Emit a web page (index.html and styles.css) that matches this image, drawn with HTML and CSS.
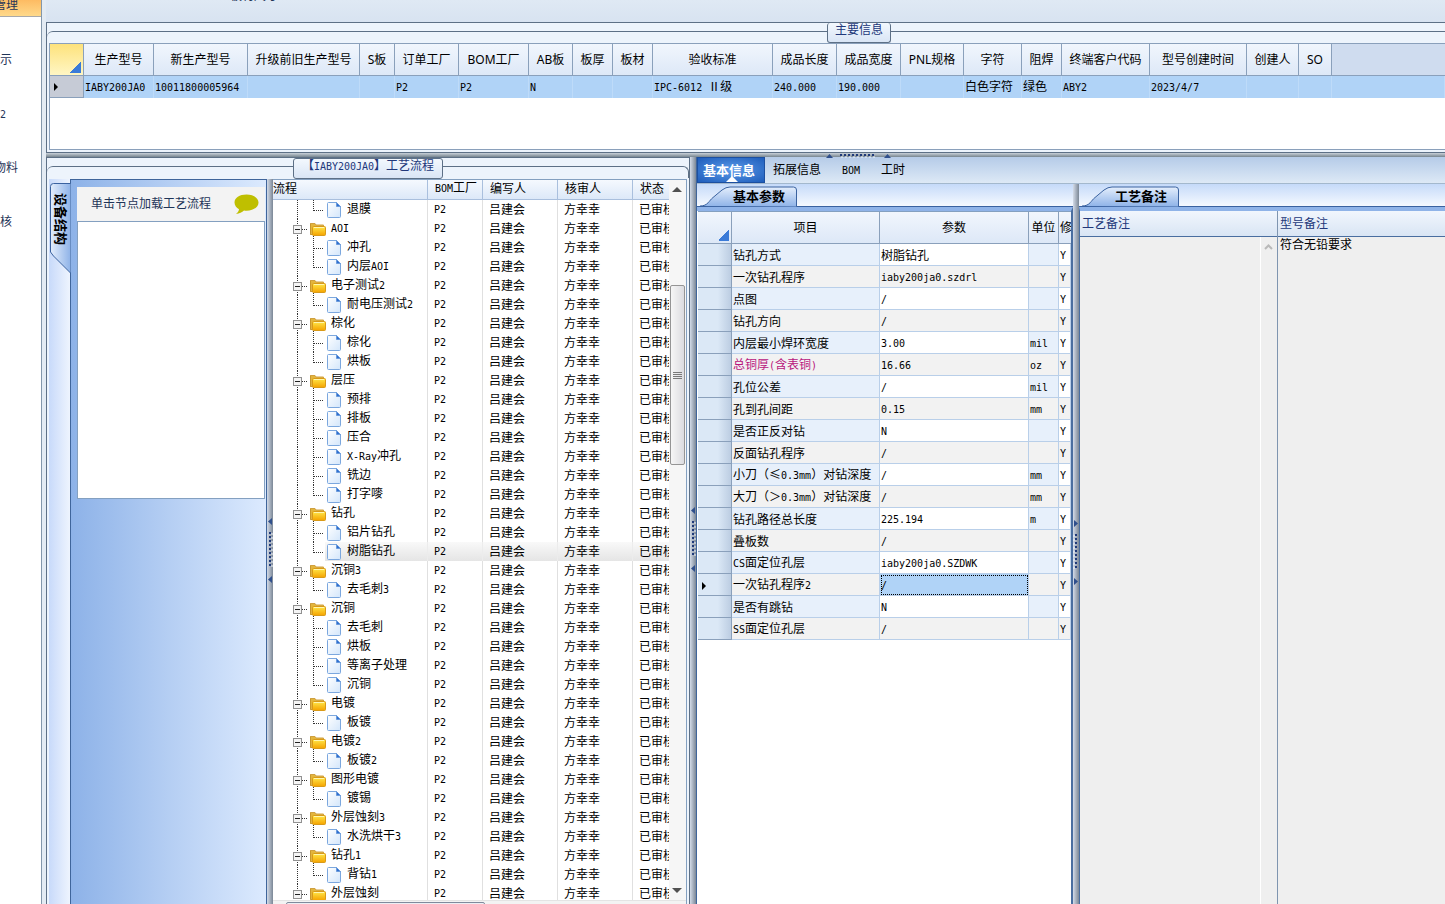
FILE: index.html
```html
<!DOCTYPE html>
<html lang="zh-CN">
<head>
  <meta charset="UTF-8" />
  <meta name="viewport" content="width=device-width, initial-scale=1.0"/>
  <title>工艺流程</title>
  <link rel="stylesheet" href="styles.css">
</head>
<body>
  <!-- shared icons -->
  <svg class="defs" width="0" height="0" aria-hidden="true">
    <defs>
      <linearGradient id="gFolder" x1="0" y1="0" x2="0" y2="1">
        <stop offset="0" stop-color="#ffe84a"/>
        <stop offset="1" stop-color="#f5a300"/>
      </linearGradient>
      <linearGradient id="gFile" x1="0" y1="0" x2="1" y2="1">
        <stop offset="0" stop-color="#ffffff"/>
        <stop offset="1" stop-color="#d3e6fb"/>
      </linearGradient>
      <linearGradient id="gTab" x1="0" y1="0" x2="0" y2="1">
        <stop offset="0" stop-color="#e4eefc"/>
        <stop offset="1" stop-color="#8fb3e8"/>
      </linearGradient>
      <linearGradient id="gSide" x1="0" y1="0" x2="1" y2="0">
        <stop offset="0" stop-color="#e4eefc"/>
        <stop offset="1" stop-color="#8fb3e8"/>
      </linearGradient>
      <symbol id="folder" viewBox="0 0 16 14">
        <path d="M0.5 12.5V1.5H5l1 1.5h7.5v3" fill="#e2b53e" stroke="#d0a040"/>
        <path d="M0.5 1.5v11H3" fill="none" stroke="#c9972c"/>
        <rect x="2.5" y="4.5" width="13" height="9" rx="1" fill="url(#gFolder)" stroke="#d99a18"/>
        <path d="M4 5.500h10" stroke="#fff7b0"/>
      </symbol>
      <symbol id="file" viewBox="0 0 14 16">
        <path d="M1.500 0.500H9.500L13.500 4.500V14.500a1 1 0 0 1-1 1H1.500a1 1 0 0 1-1-1V1.500a1 1 0 0 1 1-1z" fill="url(#gFile)" stroke="#7ba7de"/>
        <path d="M9.500 0.500v4h4z" fill="#2f6fd0" stroke="#6a9adb"/>
      </symbol>
      <symbol id="box" viewBox="0 0 9 9">
        <rect x="0.500" y="0.500" width="8" height="8" fill="#f4f4f4" stroke="#919191"/>
        <path d="M2 4.500h5" stroke="#222"/>
      </symbol>
      <symbol id="grip" viewBox="0 0 6 66">
        <path d="M5 0v7L1 3.500zM5 58v7l-4-3.500z" fill="#2f4f8c"/>
        <path d="M3 14v36" stroke="#1f3a7a" stroke-width="2" stroke-dasharray="2 2"/>
        <path d="M5 15v36" stroke="#eef3fb" stroke-width="1" stroke-dasharray="2 2"/>
      </symbol>
      <symbol id="grip-h" viewBox="0 0 66 6">
        <path d="M0 5h7L3.500 1zM58 5h7l-3.500-4z" fill="#2f4f8c"/>
        <path d="M14 2h36" stroke="#1f3a7a" stroke-width="2" stroke-dasharray="2 2"/>
        <path d="M15 4h36" stroke="#eef3fb" stroke-width="1" stroke-dasharray="2 2"/>
      </symbol>
    </defs>
  </svg>

  <div class="app">
    <nav class="nav">
      <a href="#" class="nav-head"><span class="cut">管理</span></a>
      <a href="#">示</a>
      <a href="#"><span class="ms">2</span></a>
      <a href="#"><span class="cut">物料</span></a>
      <a href="#">核</a>
    </nav>

    <main class="work">
      <div class="top-band"><span>板材尺寸</span></div>

      <section class="main-info">
        <div class="group-line"></div>
        <div class="legend-row"><h2 class="legend">主要信息</h2></div>
        <div class="grid-box">
          <table class="grid main-grid">
            <colgroup>
              <col class="w34"><col class="w70"><col class="w94"><col class="w112"><col class="w35"><col class="w64"><col class="w70"><col class="w44"><col class="w40"><col class="w40"><col class="w120"><col class="w64"><col class="w64"><col class="w63"><col class="w58"><col class="w40"><col class="w88"><col class="w97"><col class="w52"><col class="w33"><col>
            </colgroup>
            <thead>
              <tr>
                <th class="corner yellow"></th>
                <th>生产型号</th><th>新生产型号</th><th>升级前旧生产型号</th><th>S板</th><th>订单工厂</th><th>BOM工厂</th><th>AB板</th><th>板厚</th><th>板材</th><th>验收标准</th><th>成品长度</th><th>成品宽度</th><th>PNL规格</th><th>字符</th><th>阻焊</th><th>终端客户代码</th><th>型号创建时间</th><th>创建人</th><th>SO</th><th class="rest"></th>
              </tr>
            </thead>
            <tbody>
              <tr>
                <td class="row-head current"></td>
                <td data-t>IABY200JA0</td><td data-t>10011800005964</td><td></td><td></td><td data-t>P2</td><td data-t>P2</td><td data-t>N</td><td></td><td></td><td data-t>IPC-6012 Ⅱ级</td><td data-t>240.000</td><td data-t>190.000</td><td></td><td>白色字符</td><td>绿色</td><td data-t>ABY2</td><td data-t>2023/4/7</td><td></td><td></td><td></td>
              </tr>
            </tbody>
          </table>
        </div>
      </section>

      <div class="split-h"><svg width="66" height="6"><use href="#grip-h"/></svg></div>

      <div class="lower">
        <section class="flow">
          <div class="group-line"></div>
          <div class="legend-row"><h2 class="legend" data-t>【IABY200JA0】工艺流程</h2></div>
          <div class="flow-body">
            <div class="side">
              <button type="button" class="side-tab">
                <svg width="22" height="92" viewBox="0 0 22 92">
                  <path d="M21.500 0.500H4.500a3 3 0 0 0-3 3V69l3 4 17 17z" fill="url(#gSide)"/>
                  <path d="M21.500 0.500H4.500a3 3 0 0 0-3 3V69l3 4 17 17" fill="none" stroke="#3a62a0"/>
                </svg>
                <span>设备结构</span>
              </button>
            </div>
            <div class="device">
              <div class="device-head">
                <span>单击节点加载工艺流程</span>
                <svg width="25" height="21" viewBox="0 0 25 21">
                  <path d="M12.500 0.500C5.500 0.500 0.500 4 0.500 8.500c0 3 2 5.300 4.500 6.700-.3 2-1.500 3.500-3 4.800 3.500-.3 6-1.800 8-3.500.8.100 1.600.2 2.500.2 7 0 12-3.700 12-8.200s-5-8-12-8z" fill="#bfbf00"/>
                </svg>
              </div>
              <div class="device-list"></div>
            </div>
            <div class="split-v"><svg width="6" height="66"><use href="#grip"/></svg></div>
            <div class="tree-box">
              <div class="tree-main">
                <div class="tree-view">
                  <table class="tree">
                    <colgroup><col class="w155"><col class="w55"><col class="w75"><col class="w75"><col></colgroup>
                    <thead>
                      <tr><th class="first">流程</th><th data-t>BOM工厂</th><th>编写人</th><th>核审人</th><th>状态</th></tr>
                    </thead>
                    <tbody id="treeRows"></tbody>
                  </table>
                </div>
                <div class="vbar">
                  <svg width="14" height="18"><path d="M2 12h10L7 7z" fill="#505050"/></svg>
                  <div class="thumb"><i></i><i></i><i></i><i></i></div>
                  <svg width="14" height="18"><path d="M2 6h10L7 11z" fill="#505050"/></svg>
                </div>
              </div>
              <div class="hbar"><div class="thumb"></div></div>
            </div>
          </div>
        </section>

        <div class="split-v lower-grip"><svg width="6" height="66"><use href="#grip"/></svg></div>

        <section class="detail">
          <div class="tabs">
            <button type="button" class="active">基本信息</button>
            <button type="button">拓展信息</button>
            <button type="button"><span class="ms">BOM</span></button>
            <button type="button">工时</button>
          </div>
          <div class="detail-body">
            <div class="pane params">
              <div class="pane-strip">
                <button type="button" class="pane-tab">
                  <svg width="98" height="20" viewBox="0 0 98 20">
                    <path d="M0 19.500C8 19.500 9 14 13 11L22 3.500Q26 0.500 30 0.500H93.500a3 3 0 0 1 3 3V20z" fill="url(#gTab)"/>
                    <path d="M0 19.500C8 19.500 9 14 13 11L22 3.500Q26 0.500 30 0.500H93.500a3 3 0 0 1 3 3V20" fill="none" stroke="#3a62a0"/>
                  </svg>
                  <span>基本参数</span>
                </button>
              </div>
              <div class="pane-content">
                <table class="grid param-grid">
                  <colgroup><col class="w34"><col class="w148"><col class="w149"><col class="w30"><col></colgroup>
                  <thead>
                    <tr><th class="corner"></th><th>项目</th><th>参数</th><th>单位</th><th class="clip">修</th></tr>
                  </thead>
                  <tbody id="paramRows"></tbody>
                </table>
              </div>
            </div>

            <div class="split-v detail-grip"><svg width="6" height="66" class="flip"><use href="#grip"/></svg></div>

            <div class="pane notes">
              <div class="pane-strip">
                <button type="button" class="pane-tab">
                  <svg width="98" height="20" viewBox="0 0 98 20">
                    <path d="M0 19.500C8 19.500 9 14 13 11L22 3.500Q26 0.500 30 0.500H93.500a3 3 0 0 1 3 3V20z" fill="url(#gTab)"/>
                    <path d="M0 19.500C8 19.500 9 14 13 11L22 3.500Q26 0.500 30 0.500H93.500a3 3 0 0 1 3 3V20" fill="none" stroke="#3a62a0"/>
                  </svg>
                  <span>工艺备注</span>
                </button>
              </div>
              <div class="notes-cols">
                <div class="note process-note">
                  <label for="processNote">工艺备注</label>
                  <div class="note-area">
                    <textarea id="processNote" readonly></textarea>
                    <div class="note-bar"><svg width="9" height="6" viewBox="0 0 9 6"><path d="M1 5l3.500-3.500L8 5" fill="none" stroke="#b9b9b9" stroke-width="2"/></svg></div>
                  </div>
                </div>
                <div class="note">
                  <label for="modelNote">型号备注</label>
                  <div class="note-area">
                    <textarea id="modelNote" readonly>符合无铅要求</textarea>
                  </div>
                </div>
              </div>
            </div>
          </div>
        </section>
      </div>
    </main>
  </div>
  <script src="script.js"></script>
</body>
</html>
```

FILE: styles.css
```css
* {
  box-sizing: border-box;
  margin: 0;
  padding: 0;
}

body {
  background: #fff;
  color: #000;
  font-family: "Noto Sans", "Noto Sans CJK SC", sans-serif;
  font-size: 12px;
  line-height: 16px;
  overflow: hidden;
}

button {
  border: none;
  background: none;
  font: inherit;
  color: inherit;
  cursor: pointer;
}

.defs {
  position: absolute;
}

/* fixed width latin text, half the width of a CJK character */
.ms {
  font-family: "DejaVu Sans Mono", monospace;
  font-size: 10px;
}

/* the last few pixels of the window sit below the screen edge */
.app {
  display: flex;
  height: calc(100vh + 18px);
}

/* left navigation */
.nav {
  width: 42px;
  flex: none;
  overflow: hidden;
  border-right: 1px solid #8397ab;
  display: flex;
  flex-direction: column;
}

.nav a {
  height: 54px;
  flex: none;
  padding-top: 20px;
  color: #1f3558;
  text-decoration: none;
  white-space: nowrap;
}

.nav a.nav-head {
  height: 17px;
  margin-bottom: 15px;
  padding: 0;
  line-height: 10px;
  background: linear-gradient(#fdbb62, #ffd98a);
  border-bottom: 1px solid #a9a9a9;
}

.nav .cut {
  margin-left: -6px;
}

.work {
  flex: 1;
  min-width: 0;
  display: flex;
  flex-direction: column;
  border-left: 4px solid #e3ebf3;
}

.top-band {
  height: 22px;
  flex: none;
  padding-left: 184px;
  line-height: 16px;
  background: linear-gradient(#dfe9f4, #d8e3f1);
  color: #1f3558;
}

.top-band span {
  display: block;
  margin-top: -12px;
}

/* group box */
.group-line {
  height: 12px;
  flex: none;
  margin-top: 8px;
  border-top: 1px solid #5d7086;
  border-radius: 6px 0 0 0;
}

.legend-row {
  height: 20px;
  flex: none;
  margin-top: -20px;
  display: flex;
  justify-content: center;
}

.legend {
  height: 20px;
  padding: 0 7px;
  border: 1px solid #5d7086;
  border-radius: 3px;
  background: linear-gradient(#f3f8fe, #d9e5f5);
  color: #22387a;
  font-size: 12px;
  font-weight: normal;
  line-height: 14px;
  white-space: nowrap;
}

.main-info {
  height: 131px;
  flex: none;
  border: 1px solid #5d7086;
  border-right: none;
  background: #edf4fc;
}

.main-info .legend-row {
  padding-left: 226px;
}

.main-info .legend {
  border-top: none;
}

.grid-box {
  height: 107px;
  margin-left: 2px;
  border: 1px solid #8aa0bb;
  border-right: none;
  background: #fff;
  overflow: hidden;
}

.split-h {
  height: 4px;
  flex: none;
  display: flex;
  justify-content: center;
  padding-left: 226px;
  background: linear-gradient(#c8d0d8, #77858f);
}

.split-h svg {
  flex: none;
  position: relative;
  z-index: 1;
}

/* grids */
.grid {
  width: 100%;
  border-collapse: separate;
  border-spacing: 0;
  table-layout: fixed;
}

.grid th {
  height: 32px;
  border-right: 1px solid #8aa0bb;
  border-bottom: 1px solid #8aa0bb;
  background: linear-gradient(#f1f6fd, #dde8f7);
  font-weight: normal;
  text-align: center;
  white-space: nowrap;
}

.grid td {
  height: 22px;
  padding-left: 1px;
  white-space: nowrap;
  overflow: hidden;
}

.grid th.corner {
  background: linear-gradient(135deg, transparent 50%, #3b7bd8 50%) right 2px bottom 2px / 11px 11px no-repeat, linear-gradient(#f1f6fd, #dde8f7);
}

.grid th.yellow {
  background: linear-gradient(135deg, transparent 50%, #3b7bd8 50%) right 2px bottom 2px / 11px 11px no-repeat, linear-gradient(#fde27c, #fff6c4);
}

.grid th.rest {
  background: #cfdcef;
  border-right: none;
}

.main-grid td {
  background: #b0d3f7;
  border-right: 1px solid #bedbf9;
}

.main-grid td.row-head {
  background-color: #c6cbd6;
  border-right: 1px solid #8aa0bb;
  border-bottom: 1px solid #8aa0bb;
}

.row-head.current::before {
  content: "";
  display: block;
  margin-left: 3px;
  width: 0;
  border-left: 4px solid #000;
  border-top: 4px solid transparent;
  border-bottom: 4px solid transparent;
}

.w30 { width: 30px; }
.w33 { width: 33px; }
.w34 { width: 34px; }
.w35 { width: 35px; }
.w40 { width: 40px; }
.w44 { width: 44px; }
.w52 { width: 52px; }
.w55 { width: 55px; }
.w58 { width: 58px; }
.w63 { width: 63px; }
.w64 { width: 64px; }
.w70 { width: 70px; }
.w75 { width: 75px; }
.w88 { width: 88px; }
.w94 { width: 94px; }
.w97 { width: 97px; }
.w112 { width: 112px; }
.w120 { width: 120px; }
.w148 { width: 148px; }
.w149 { width: 149px; }
.w155 { width: 155px; }

/* lower half */
.lower {
  flex: 1;
  min-height: 0;
  display: flex;
}

.flow {
  width: 644px;
  flex: none;
  display: flex;
  flex-direction: column;
  background: #edf4fc;
  border: 1px solid #5d7086;
  border-bottom: none;
}

.flow .group-line {
  border-right: 1px solid #5d7086;
  border-radius: 6px 6px 0 0;
}

.flow .legend {
  height: 21px;
  padding: 0 8px;
}

.flow-body {
  flex: 1;
  min-height: 0;
  display: flex;
  margin-top: 1px;
  padding: 0 2px;
}

.side {
  width: 21px;
  flex: none;
  padding-top: 4px;
  background: linear-gradient(90deg, #c8dafa, #eef4fe);
}

.side-tab {
  position: relative;
  display: block;
  z-index: 1;
}

.side-tab svg {
  display: block;
}

.side-tab span {
  position: absolute;
  left: 4px;
  top: 10px;
  writing-mode: vertical-rl;
  text-orientation: sideways;
  font-size: 13px;
  font-weight: bold;
}

.device {
  flex: 1;
  min-width: 0;
  padding: 7px 1px 0 6px;
  border: 1px solid #3f659b;
  border-bottom: none;
  background: linear-gradient(90deg, #8db2e8, #dceafe);
}

.device-head {
  height: 34px;
  display: flex;
  align-items: center;
  justify-content: space-between;
  padding: 0 6px 0 14px;
  background: #f3f3f3;
  color: #1f3558;
}

.device-list {
  height: 278px;
  border: 1px solid #84a0c0;
  background: #fff;
}

.split-v {
  width: 6px;
  flex: none;
  display: flex;
  align-items: center;
  background: linear-gradient(90deg, #d3dbe8, #7b8796);
}

.lower-grip {
  width: 7px;
  border-right: 1px solid #3f659b;
}

.flip {
  transform: scaleX(-1);
}

/* process tree */
.tree-box {
  width: 414px;
  flex: none;
  display: flex;
  flex-direction: column;
  background: #fff;
  border-top: 1px solid #84a0c0;
  border-right: 1px solid #84a0c0;
}

.tree-main {
  flex: 1;
  min-height: 0;
  display: flex;
}

.tree-view {
  flex: 1;
  min-width: 0;
  overflow: hidden;
}

.tree {
  width: 100%;
  border-collapse: separate;
  border-spacing: 0;
  table-layout: fixed;
}

.tree th {
  height: 19px;
  padding: 0 0 2px 7px;
  background: linear-gradient(#f5f9fe, #dce8f8);
  border-right: 1px solid #a9bfdd;
  border-bottom: 1px solid #a9bfdd;
  font-weight: normal;
  line-height: 16px;
  text-align: left;
  white-space: nowrap;
}

.tree th.first {
  padding-left: 0;
}

.tree td {
  height: 19px;
  padding-left: 6px;
  border-right: 1px solid #e0e0e0;
  line-height: 18px;
  white-space: nowrap;
  overflow: hidden;
}

.tree td:last-child,
.tree th:last-child {
  border-right: none;
}

.tree td.node {
  padding-left: 0;
}

.node div {
  display: flex;
  height: 19px;
}

.node svg {
  flex: none;
}

.node span.label {
  flex: 1;
  padding-left: 4px;
}

.tree tr.selected td {
  background: linear-gradient(#f9f9f9, #e5e5e5);
  border-right-color: #ececec;
}

.tree tr.selected td.node {
  background: linear-gradient(#f9f9f9, #e5e5e5) 52px 0 no-repeat;
}

.vbar {
  width: 17px;
  flex: none;
  padding: 0 1px;
  display: flex;
  flex-direction: column;
  background: #f6f6f6;
}

.vbar .thumb {
  width: 15px;
  height: 180px;
  margin: 87px 0 auto;
  display: flex;
  flex-direction: column;
  align-items: center;
  justify-content: center;
  gap: 1px;
  border: 1px solid #959595;
  border-radius: 2px;
  background: linear-gradient(90deg, #f6f6f6, #dcdce0);
}

.thumb i {
  width: 9px;
  height: 1px;
  background: #7a7a7a;
}

.hbar {
  height: 22px;
  flex: none;
  padding: 1px 0 0 13px;
  background: #f3f3f3;
  border-top: 1px solid #e4e4e4;
}

.hbar .thumb {
  width: 199px;
  height: 16px;
  border: 1px solid #7f8a9c;
  border-radius: 2px;
  background: #eceef3;
}

/* details */
.detail {
  flex: 1;
  min-width: 0;
  display: flex;
  flex-direction: column;
}

.tabs {
  height: 27px;
  flex: none;
  display: flex;
  background: linear-gradient(#b5cbe8, #dde9f6);
  border-bottom: 1px solid #a3b8cd;
}

.tabs button {
  padding: 0 8px;
  margin-right: 5px;
}

.tabs button.active {
  position: relative;
  margin-right: 0;
  padding: 0 8px 0 4px;
  width: 68px;
  border: 1px solid #1c4fa0;
  background: radial-gradient(#5c9bea, #1e5dbb);
  color: #fff;
  font-size: 13px;
  font-weight: bold;
  white-space: nowrap;
}

.tabs button.active::after {
  content: "";
  position: absolute;
  left: 28px;
  bottom: 0;
  border: 6px solid transparent;
  border-top: none;
  border-bottom-color: #fff;
}

.detail-body {
  flex: 1;
  min-height: 0;
  display: flex;
}

.pane {
  display: flex;
  flex-direction: column;
}

.pane-strip {
  height: 23px;
  flex: none;
  padding: 2px 0 0 3px;
  background: linear-gradient(#c5daf9, #f5f9ff);
  border-bottom: 1px solid #3a62a0;
}

.pane-tab {
  position: relative;
  display: block;
}

.pane-tab svg {
  display: block;
  height: 21px;
}

.pane-tab span {
  position: absolute;
  left: 33px;
  top: 2px;
  font-size: 13px;
  font-weight: bold;
  white-space: nowrap;
}

.params {
  width: 376px;
  flex: none;
}

.pane-content {
  flex: 1;
  min-height: 0;
  overflow: hidden;
  padding-left: 1px;
  border-top: 4px solid #8fb3e8;
  border-right: 2px solid #4a6ea0;
}

.param-grid {
  border-top: 1px solid #84a0c0;
}

.param-grid th.clip {
  overflow: hidden;
  text-align: left;
  padding-left: 1px;
  border-right: none;
}

.param-grid td {
  padding-top: 2px;
  border-right: 1px solid #b9cfe9;
  border-bottom: 1px solid #b9cfe9;
}

.param-grid tr:nth-child(even) td {
  background: #f2f2f2;
}

.param-grid td:nth-child(2),
.param-grid td:nth-child(4) {
  background: #e7f0fb;
}

.param-grid tr td.row-head {
  background: linear-gradient(90deg, #dbe8f6 60%, #bccde2);
  border-right-color: #8aa0bb;
  border-bottom-color: #8aa0bb;
}

.param-grid tr td.focus {
  background: #b0d3f7;
  outline: 1px dotted #000;
  outline-offset: -2px;
}

.param-grid .key {
  color: #b8147c;
}

.notes {
  flex: 1;
  min-width: 0;
}

.notes-cols {
  flex: 1;
  min-height: 0;
  display: flex;
  border-top: 4px solid #8fb3e8;
  border-left: 1px solid #4a6ea0;
}

.note {
  flex: 1;
  min-width: 0;
  display: flex;
  flex-direction: column;
}

.note.process-note {
  flex: 0 0 198px;
  border-right: 1px solid #7f95b0;
}

.note label {
  height: 26px;
  padding: 5px 2px 4px;
  background: linear-gradient(#f1f6fd, #d9e5f4);
  border-bottom: 1px solid #4a6ea0;
  color: #22387a;
}

.note-area {
  flex: 1;
  display: flex;
  background: #efefef;
}

.note-area textarea {
  flex: 1;
  min-width: 0;
  padding: 0 2px;
  border: none;
  outline: none;
  resize: none;
  background: transparent;
  font: inherit;
  line-height: 16px;
}

.note-bar {
  width: 17px;
  padding: 1px 3px;
  border-left: 1px solid #fff;
}
```

FILE: script.js
```js
// type 0 = operation group, 1 = step inside the group
const nodes = [
  [1, '退膜'],
  [0, 'AOI'], [1, '冲孔'], [1, '内层AOI'],
  [0, '电子测试2'], [1, '耐电压测试2'],
  [0, '棕化'], [1, '棕化'], [1, '烘板'],
  [0, '层压'], [1, '预排'], [1, '排板'], [1, '压合'], [1, 'X-Ray冲孔'], [1, '铣边'], [1, '打字嘜'],
  [0, '钻孔'], [1, '铝片钻孔'], [1, '树脂钻孔', true],
  [0, '沉铜3'], [1, '去毛刺3'],
  [0, '沉铜'], [1, '去毛刺'], [1, '烘板'], [1, '等离子处理'], [1, '沉铜'],
  [0, '电镀'], [1, '板镀'],
  [0, '电镀2'], [1, '板镀2'],
  [0, '图形电镀'], [1, '镀锡'],
  [0, '外层蚀刻3'], [1, '水洗烘干3'],
  [0, '钻孔1'], [1, '背钻1'],
  [0, '外层蚀刻'],
];

// name, value, unit, state
const params = [
  ['钻孔方式', '树脂钻孔', ''],
  ['一次钻孔程序', 'iaby200ja0.szdrl', ''],
  ['点图', '/', ''],
  ['钻孔方向', '/', ''],
  ['内层最小焊环宽度', '3.00', 'mil'],
  ['总铜厚(含表铜)', '16.66', 'oz', 'key'],
  ['孔位公差', '/', 'mil'],
  ['孔到孔间距', '0.15', 'mm'],
  ['是否正反对钻', 'N', ''],
  ['反面钻孔程序', '/', ''],
  ['小刀（≤0.3mm）对钻深度', '/', 'mm'],
  ['大刀（＞0.3mm）对钻深度', '/', 'mm'],
  ['钻孔路径总长度', '225.194', 'm'],
  ['叠板数', '/', ''],
  ['CS面定位孔层', 'iaby200ja0.SZDWK', ''],
  ['一次钻孔程序2', '/', '', 'current'],
  ['是否有跳钻', 'N', ''],
  ['SS面定位孔层', '/', ''],
];

// wrap latin runs so they use the fixed width font
function fmt(text) {
  return text.replace(/[\x20-\x7e]+/g, '<span class="ms">$&</span>');
}

function nodeIcon(type, last) {
  const dots = 'stroke="#333" stroke-dasharray="1 1" fill="none"';
  if (type === 0) {
    return `<svg width="54" height="19">
      <path d="M24.5 0V19M29 10.5H35M40.5 17V19" ${dots}/>
      <use href="#box" x="20" y="6" width="9" height="9"/>
      <use href="#folder" x="37" y="3" width="16" height="14"/></svg>`;
  }
  return `<svg width="70" height="19">
    <path d="M24.5 0V19M40.5 0V${last ? 11 : 19}M41 10.5H51" ${dots}/>
    <use href="#file" x="54" y="2" width="14" height="16"/></svg>`;
}

document.getElementById('treeRows').innerHTML = nodes.map(([type, name, selected], i) => {
  const last = !nodes[i + 1] || nodes[i + 1][0] === 0;
  return `<tr class="${selected ? 'selected' : ''}">
    <td class="node"><div>${nodeIcon(type, last)}<span class="label">${fmt(name)}</span></div></td>
    <td>${fmt('P2')}</td><td>吕建会</td><td>方幸幸</td><td>已审核</td></tr>`;
}).join('');

document.getElementById('paramRows').innerHTML = params.map(([name, value, unit, state]) => `<tr>
  <td class="row-head ${state === 'current' ? 'current' : ''}"></td>
  <td class="${state === 'key' ? 'key' : ''}">${fmt(name)}</td>
  <td class="${state === 'current' ? 'focus' : ''}">${fmt(value)}</td>
  <td>${fmt(unit)}</td><td>${fmt('Y')}</td></tr>`).join('');

document.querySelectorAll('[data-t]').forEach((el) => {
  el.innerHTML = fmt(el.textContent);
});
```
